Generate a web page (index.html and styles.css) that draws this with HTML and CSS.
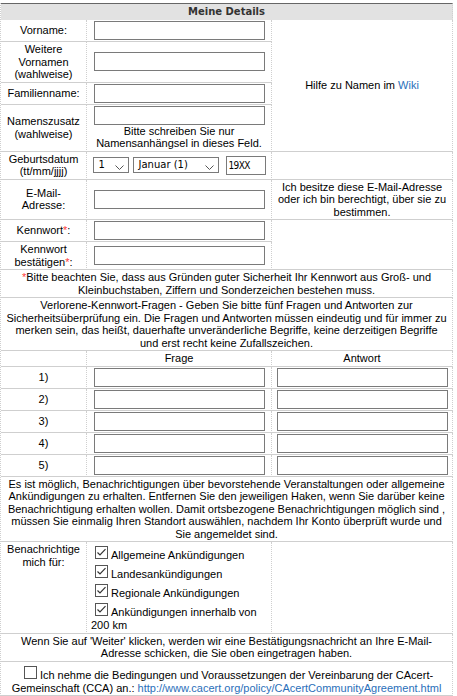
FILE: index.html
```html
<!DOCTYPE html>
<html lang="de">
<head>
<meta charset="utf-8">
<title>Meine Details</title>
<link rel="stylesheet" href="styles.css">
</head>
<body>
<table class="wrapper">
  <colgroup><col class="c1"><col class="c2"><col class="c3"></colgroup>
  <tr><td colspan="3" class="title">Meine Details</td></tr>
  <tr>
    <td>Vorname:</td>
    <td><input class="txt" type="text"></td>
    <td rowspan="4">Hilfe zu Namen im <a href="#">Wiki</a></td>
  </tr>
  <tr>
    <td>Weitere Vornamen (wahlweise)</td>
    <td><input class="txt" type="text"></td>
  </tr>
  <tr>
    <td>Familienname:</td>
    <td><input class="txt" type="text"></td>
  </tr>
  <tr>
    <td>Namenszusatz (wahlweise)</td>
    <td><input class="txt" type="text"><div class="hint">Bitte schreiben Sie nur Namensanhängsel in dieses Feld.</div></td>
  </tr>
  <tr>
    <td>Geburtsdatum (tt/mm/jjjj)</td>
    <td>
      <div class="date">
        <span class="sel sel-day">1<svg class="chev" width="9" height="5" viewBox="0 0 9 5"><polyline points="0.5,0.5 4.5,4.5 8.5,0.5"/></svg></span>
        <span class="sel sel-month">Januar (1)<svg class="chev" width="9" height="5" viewBox="0 0 9 5"><polyline points="0.5,0.5 4.5,4.5 8.5,0.5"/></svg></span>
        <input class="year" type="text" value="19XX">
      </div>
    </td>
    <td></td>
  </tr>
  <tr>
    <td>E-Mail-Adresse:</td>
    <td><input class="txt" type="text"></td>
    <td>Ich besitze diese E-Mail-Adresse oder ich bin berechtigt, über sie zu bestimmen.</td>
  </tr>
  <tr>
    <td>Kennwort<span class="req">*</span>:</td>
    <td><input class="txt" type="password"></td>
    <td rowspan="2"></td>
  </tr>
  <tr>
    <td>Kennwort bestätigen<span class="req">*</span>:</td>
    <td><input class="txt" type="password"></td>
  </tr>
  <tr>
    <td colspan="3" class="wide"><span class="req">*</span>Bitte beachten Sie, dass aus Gründen guter Sicherheit Ihr Kennwort aus Groß- und Kleinbuchstaben, Ziffern und Sonderzeichen bestehen muss.</td>
  </tr>
  <tr>
    <td colspan="3" class="wide">Verlorene-Kennwort-Fragen - Geben Sie bitte fünf Fragen und Antworten zur Sicherheitsüberprüfung ein. Die Fragen und Antworten müssen eindeutig und für immer zu merken sein, das heißt, dauerhafte unveränderliche Begriffe, keine derzeitigen Begriffe und erst recht keine Zufallszeichen.</td>
  </tr>
  <tr>
    <td></td>
    <td>Frage</td>
    <td>Antwort</td>
  </tr>
  <tr><td>1)</td><td><input class="txt" type="text"></td><td><input class="txt" type="text"></td></tr>
  <tr><td>2)</td><td><input class="txt" type="text"></td><td><input class="txt" type="text"></td></tr>
  <tr><td>3)</td><td><input class="txt" type="text"></td><td><input class="txt" type="text"></td></tr>
  <tr><td>4)</td><td><input class="txt" type="text"></td><td><input class="txt" type="text"></td></tr>
  <tr><td>5)</td><td><input class="txt" type="text"></td><td><input class="txt" type="text"></td></tr>
  <tr>
    <td colspan="3" class="wide">Es ist möglich, Benachrichtigungen über bevorstehende Veranstaltungen oder allgemeine Ankündigungen zu erhalten. Entfernen Sie den jeweiligen Haken, wenn Sie darüber keine Benachrichtigung erhalten wollen. Damit ortsbezogene Benachrichtigungen möglich sind , müssen Sie einmalig Ihren Standort auswählen, nachdem Ihr Konto überprüft wurde und Sie angemeldet sind.</td>
  </tr>
  <tr>
    <td class="top">Benachrichtige mich für:</td>
    <td class="checks">
      <div><svg class="cb" width="13" height="13" viewBox="0 0 13 13"><rect x="0.5" y="0.5" width="12" height="12"/><polyline points="2.5,6.5 5,9 10.5,3.2"/></svg>Allgemeine Ankündigungen</div>
      <div><svg class="cb" width="13" height="13" viewBox="0 0 13 13"><rect x="0.5" y="0.5" width="12" height="12"/><polyline points="2.5,6.5 5,9 10.5,3.2"/></svg>Landesankündigungen</div>
      <div><svg class="cb" width="13" height="13" viewBox="0 0 13 13"><rect x="0.5" y="0.5" width="12" height="12"/><polyline points="2.5,6.5 5,9 10.5,3.2"/></svg>Regionale Ankündigungen</div>
      <div><svg class="cb" width="13" height="13" viewBox="0 0 13 13"><rect x="0.5" y="0.5" width="12" height="12"/><polyline points="2.5,6.5 5,9 10.5,3.2"/></svg>Ankündigungen innerhalb von 200 km</div>
    </td>
    <td></td>
  </tr>
  <tr>
    <td colspan="3" class="wide">Wenn Sie auf 'Weiter' klicken, werden wir eine Bestätigungsnachricht an Ihre E-Mail-Adresse schicken, die Sie oben eingetragen haben.</td>
  </tr>
  <tr>
    <td colspan="3" class="wide"><svg class="cb" width="13" height="13" viewBox="0 0 13 13"><rect x="0.5" y="0.5" width="12" height="12"/></svg>Ich nehme die Bedingungen und Voraussetzungen der Vereinbarung der CAcert-Gemeinschaft (CCA) an.: <a href="#">http://www.cacert.org/policy/CAcertCommunityAgreement.html</a></td>
  </tr>
</table>
</body>
</html>
```

FILE: styles.css
```css
* {
  box-sizing: border-box;
}

body {
  margin: 0;
  padding-top: 3px;
  background: #fff;
  color: #000;
  font-family: "Liberation Sans", Arial, sans-serif;
  font-size: 11px;
  line-height: 12.5px;
}

.wrapper {
  width: 453px;
  table-layout: fixed;
  border-collapse: separate;
  border-spacing: 0;
  border-left: 1px dotted #cfcfcf;
}

.c1 { width: 86px; }
.c2 { width: 185px; }
.c3 { width: 181px; }

td {
  padding: 1px 4px;
  text-align: center;
  vertical-align: middle;
  border-right: 1px dotted #cfcfcf;
  border-bottom: 1px solid #cfcfcf;
}

td.title {
  padding: 0;
  background: #e2e2e2;
  border-top: 1px solid #666;
  border-bottom: 1px solid #e2e2e2;
  color: #333;
  font-family: "DejaVu Sans", Verdana, sans-serif;
  font-weight: bold;
  font-size: 10px;
  line-height: 15px;
}

td.wide {
  padding: 1px 5px;
}

td.top {
  vertical-align: top;
}

a {
  color: #2a6fba;
  text-decoration: none;
}

.req {
  color: #ff3b3b;
}

.txt {
  display: block;
  width: 171px;
  height: 19px;
  margin: 0 auto;
  padding: 0 2px;
  border: 1px solid #7a7a7a;
  border-radius: 0;
  background: #fff;
  font: 11px "Liberation Sans", Arial, sans-serif;
  outline: none;
}

.hint {
  margin-top: 0;
}

.date {
  display: flex;
  align-items: center;
  justify-content: center;
}

.sel {
  display: inline-flex;
  align-items: center;
  justify-content: space-between;
  height: 16px;
  padding: 0 4px 0 5px;
  border: 1px solid #7a7a7a;
  background: #fff;
  font-family: "DejaVu Sans", Verdana, sans-serif;
  font-size: 10px;
  line-height: 14px;
}

.sel-day {
  width: 36px;
}

.sel-month {
  width: 86px;
  margin-left: 4px;
}

.chev {
  margin-top: 5px;
  fill: none;
  stroke: #555;
  stroke-width: 1;
}

.year {
  width: 40px;
  height: 19px;
  margin-left: 7px;
  padding: 0 2px;
  border: 1px solid #7a7a7a;
  border-radius: 0;
  font-family: "DejaVu Sans Condensed", "DejaVu Sans", sans-serif;
  font-size: 10px;
  letter-spacing: -0.6px;
  color: #000;
  outline: none;
}

.checks {
  text-align: left;
}

.cb {
  margin: 3px 3px 3px 4px;
  vertical-align: -3px;
}

.cb rect {
  fill: #fff;
  stroke: #555;
  stroke-width: 1;
}

.cb polyline {
  fill: none;
  stroke: #333;
  stroke-width: 1.2;
}
```
